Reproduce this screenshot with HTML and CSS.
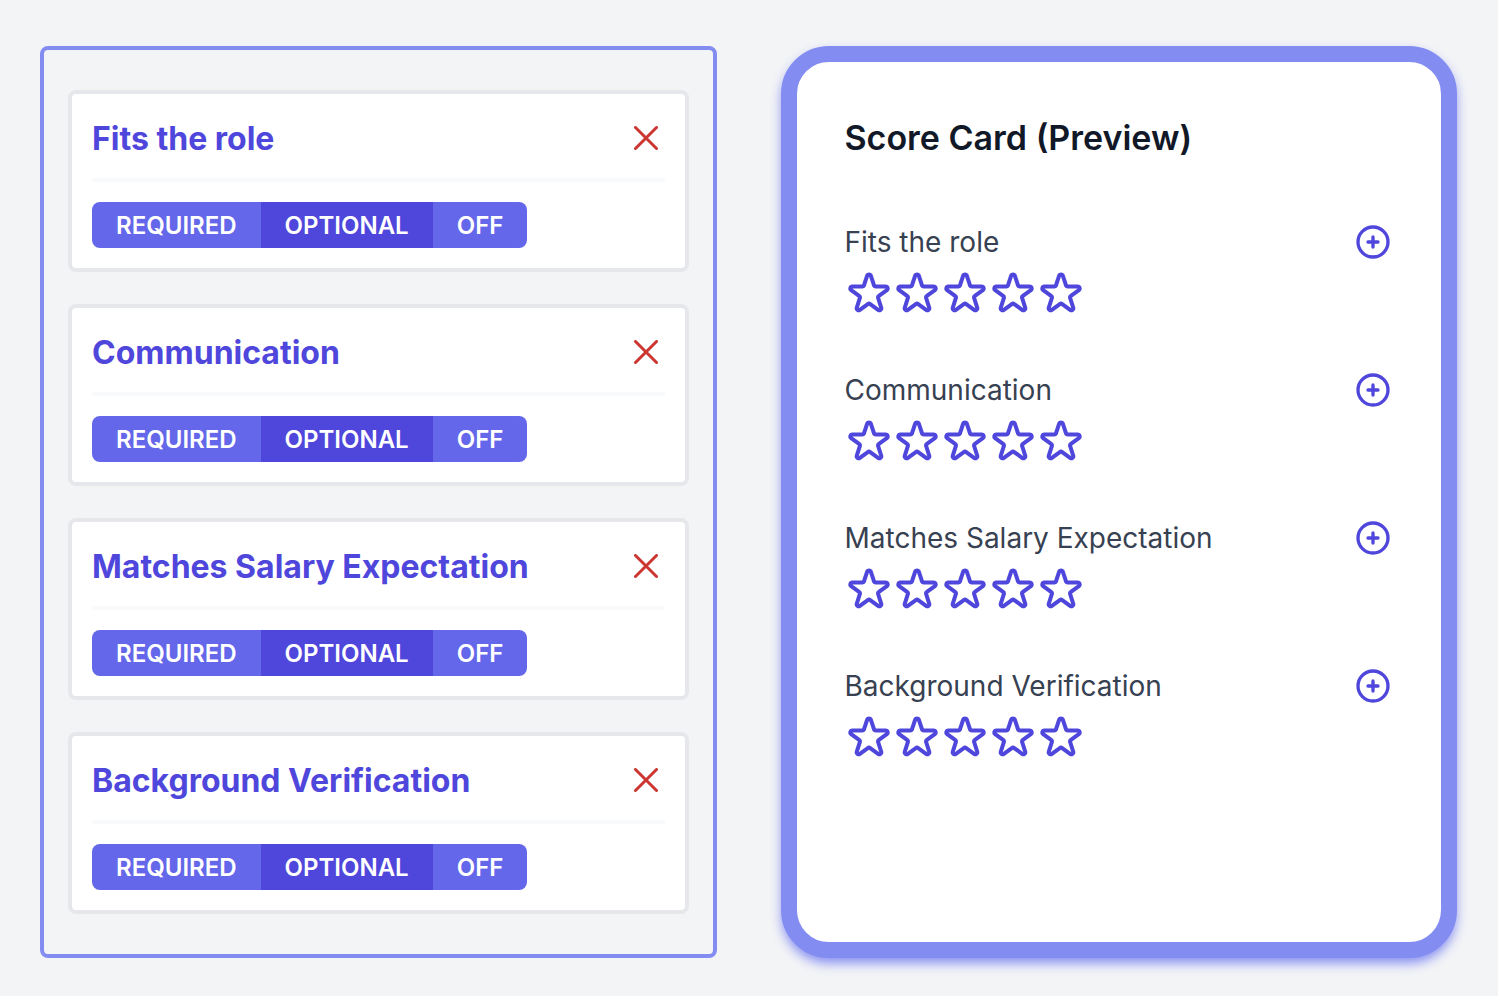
FILE: index.html
```html
<!DOCTYPE html>
<html lang="en">
<head>
<meta charset="utf-8">
<meta name="viewport" content="width=device-width, initial-scale=1">
<title>Score Card</title>
<link rel="stylesheet" href="styles.css">
</head>
<body>
<svg class="sprite" aria-hidden="true">
  <symbol id="close" viewBox="0 0 24 24"><path d="M1.500 1.500l21 21M22.500 1.500l-21 21"/></symbol>
  <symbol id="plus" viewBox="0 0 24 24"><path d="M12 9v3m0 0v3m0-3h3m-3 0H9m12 0a9 9 0 11-18 0 9 9 0 0118 0z"/></symbol>
  <symbol id="star" viewBox="0 0 24 24"><path d="M11.049 2.927c.3-.921 1.603-.921 1.902 0l1.519 4.674a1 1 0 00.95.69h4.915c.969 0 1.371 1.24.588 1.81l-3.976 2.888a1 1 0 00-.363 1.118l1.518 4.674c.3.922-.755 1.688-1.538 1.118l-3.976-2.888a1 1 0 00-1.176 0l-3.976 2.888c-.783.57-1.838-.197-1.538-1.118l1.518-4.674a1 1 0 00-.363-1.118l-3.976-2.888c-.784-.57-.38-1.81.588-1.81h4.914a1 1 0 00.951-.69l1.519-4.674z"/></symbol>
</svg>
<main class="layout">
  <section class="editor" aria-label="Criteria">
    <article class="criterion">
      <header class="criterion-head"><h2 class="criterion-title">Fits the role</h2><button class="remove" type="button" aria-label="Remove Fits the role"><svg><use href="#close"/></svg></button></header>
      <div class="modes"><button class="mode" type="button">REQUIRED</button><button class="mode active" type="button" aria-pressed="true">OPTIONAL</button><button class="mode" type="button">OFF</button></div>
    </article>
    <article class="criterion">
      <header class="criterion-head"><h2 class="criterion-title">Communication</h2><button class="remove" type="button" aria-label="Remove Communication"><svg><use href="#close"/></svg></button></header>
      <div class="modes"><button class="mode" type="button">REQUIRED</button><button class="mode active" type="button" aria-pressed="true">OPTIONAL</button><button class="mode" type="button">OFF</button></div>
    </article>
    <article class="criterion">
      <header class="criterion-head"><h2 class="criterion-title">Matches Salary Expectation</h2><button class="remove" type="button" aria-label="Remove Matches Salary Expectation"><svg><use href="#close"/></svg></button></header>
      <div class="modes"><button class="mode" type="button">REQUIRED</button><button class="mode active" type="button" aria-pressed="true">OPTIONAL</button><button class="mode" type="button">OFF</button></div>
    </article>
    <article class="criterion">
      <header class="criterion-head"><h2 class="criterion-title">Background Verification</h2><button class="remove" type="button" aria-label="Remove Background Verification"><svg><use href="#close"/></svg></button></header>
      <div class="modes"><button class="mode" type="button">REQUIRED</button><button class="mode active" type="button" aria-pressed="true">OPTIONAL</button><button class="mode" type="button">OFF</button></div>
    </article>
  </section>
  <section class="preview">
    <h1 class="preview-title">Score Card (Preview)</h1>
    <div class="scores">
      <div class="score">
        <div class="score-head"><span class="score-label">Fits the role</span><button class="add" type="button" aria-label="Add note to Fits the role"><svg><use href="#plus"/></svg></button></div>
        <div class="stars"><button class="star" type="button" aria-label="1 star"><svg><use href="#star"/></svg></button><button class="star" type="button" aria-label="2 stars"><svg><use href="#star"/></svg></button><button class="star" type="button" aria-label="3 stars"><svg><use href="#star"/></svg></button><button class="star" type="button" aria-label="4 stars"><svg><use href="#star"/></svg></button><button class="star" type="button" aria-label="5 stars"><svg><use href="#star"/></svg></button></div>
      </div>
      <div class="score">
        <div class="score-head"><span class="score-label">Communication</span><button class="add" type="button" aria-label="Add note to Communication"><svg><use href="#plus"/></svg></button></div>
        <div class="stars"><button class="star" type="button" aria-label="1 star"><svg><use href="#star"/></svg></button><button class="star" type="button" aria-label="2 stars"><svg><use href="#star"/></svg></button><button class="star" type="button" aria-label="3 stars"><svg><use href="#star"/></svg></button><button class="star" type="button" aria-label="4 stars"><svg><use href="#star"/></svg></button><button class="star" type="button" aria-label="5 stars"><svg><use href="#star"/></svg></button></div>
      </div>
      <div class="score">
        <div class="score-head"><span class="score-label">Matches Salary Expectation</span><button class="add" type="button" aria-label="Add note to Matches Salary Expectation"><svg><use href="#plus"/></svg></button></div>
        <div class="stars"><button class="star" type="button" aria-label="1 star"><svg><use href="#star"/></svg></button><button class="star" type="button" aria-label="2 stars"><svg><use href="#star"/></svg></button><button class="star" type="button" aria-label="3 stars"><svg><use href="#star"/></svg></button><button class="star" type="button" aria-label="4 stars"><svg><use href="#star"/></svg></button><button class="star" type="button" aria-label="5 stars"><svg><use href="#star"/></svg></button></div>
      </div>
      <div class="score">
        <div class="score-head"><span class="score-label">Background Verification</span><button class="add" type="button" aria-label="Add note to Background Verification"><svg><use href="#plus"/></svg></button></div>
        <div class="stars"><button class="star" type="button" aria-label="1 star"><svg><use href="#star"/></svg></button><button class="star" type="button" aria-label="2 stars"><svg><use href="#star"/></svg></button><button class="star" type="button" aria-label="3 stars"><svg><use href="#star"/></svg></button><button class="star" type="button" aria-label="4 stars"><svg><use href="#star"/></svg></button><button class="star" type="button" aria-label="5 stars"><svg><use href="#star"/></svg></button></div>
      </div>
    </div>
  </section>
</main>
</body>
</html>
```
FILE: styles.css
```css
* { box-sizing: border-box; }
body { margin: 0; background: #f3f4f6; font-family: Inter, "Liberation Sans", sans-serif; }
h1, h2 { margin: 0; }
button { margin: 0; padding: 0; border: 0; background: none; font: inherit; cursor: pointer; }
svg { display: block; fill: none; stroke: currentColor; stroke-width: 2; stroke-linecap: round; stroke-linejoin: round; }
.sprite { display: none; }

.layout { display: grid; grid-template-columns: 1fr 1fr; gap: 64px; padding: 46px 41px 38px 40px; }

.editor { display: flex; flex-direction: column; gap: 32px; padding: 40px 24px; border: 4px solid #838cf1; border-radius: 8px; }
.criterion { padding: 20px; background: #fff; border: 4px solid #e5e7eb; border-radius: 8px; }
.criterion-head { display: flex; align-items: center; justify-content: space-between; padding-bottom: 16px; padding-right: 7px; border-bottom: 4px solid #f9fafb; margin-bottom: 20px; }
.criterion-title { padding-top: 2px; font-size: 32px; line-height: 46px; font-weight: 700; color: #4f46dc; }
.remove { color: #cc3530; }
.remove svg { width: 24px; height: 24px; stroke-width: 3; }
.modes { display: inline-flex; vertical-align: top; border-radius: 8px; overflow: hidden; }
.mode { padding: 2px 24px 0; font-size: 24px; line-height: 44px; font-weight: 600; color: #fff; background: #6467e9; }
.mode.active { background: #4f46dc; }

.preview { padding: 48px; background: #fff; border: 16px solid #838cf1; border-radius: 48px; box-shadow: 0 6px 12px -1px #838cf1; }
.preview-title { margin-bottom: 56px; font-size: 34px; line-height: 56px; font-weight: 600; color: #111827; }
.scores { display: flex; flex-direction: column; gap: 52px; }
.score-head { display: flex; align-items: center; justify-content: space-between; margin-bottom: 8px; }
.score-label { font-size: 28px; line-height: 40px; font-weight: 400; color: #374151; }
.add, .star { color: #4f46dc; }
.add svg { width: 40px; height: 40px; }
.stars { display: flex; }
.star svg { width: 48px; height: 48px; }
```
